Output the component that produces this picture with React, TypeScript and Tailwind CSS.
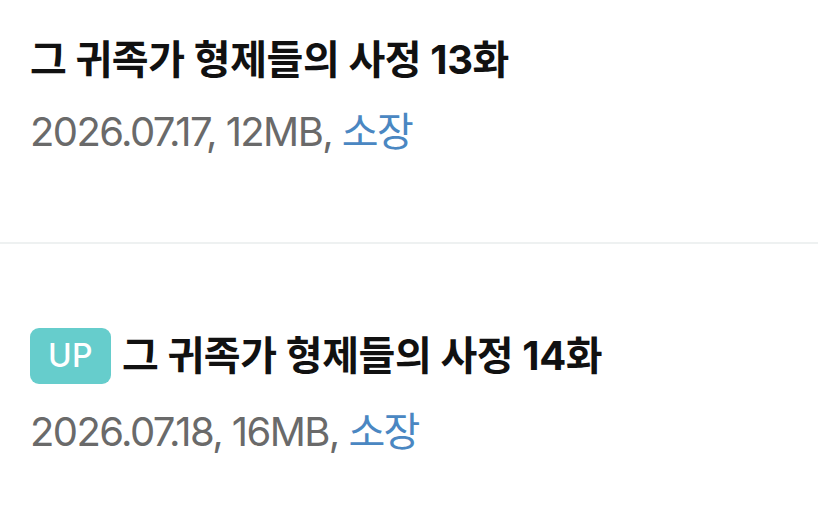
import React from "react";

type Episode = {
  title: string;
  date: string;
  size: string;
  isNew?: boolean;
};

const episodes: Episode[] = [
  { title: "그 귀족가 형제들의 사정 13화", date: "2026.07.17", size: "12MB" },
  { title: "그 귀족가 형제들의 사정 14화", date: "2026.07.18", size: "16MB", isNew: true },
];

const font = { fontFamily: "Inter, 'Noto Sans CJK KR', sans-serif" };

function EpisodeRow({ ep, first }: { ep: Episode; first: boolean }) {
  return (
    <div className={first ? "px-[30px] pt-[36px] pb-[86px]" : "px-[30px] pt-[84px] pb-[60px]"}>
      <div className="flex items-center">
        {ep.isNew && (
          <span className="mr-[11px] flex h-[56px] w-[81px] items-center justify-center rounded-[9px] bg-[#66cdcc] text-[32px] font-medium leading-none tracking-[0.01em] text-white">
            UP
          </span>
        )}
        <h2 className="text-[40px] font-bold leading-[48px] tracking-[-0.01em] text-[#111111]">
          {ep.title}
        </h2>
      </div>
      <p className="mt-[24px] text-[40px] leading-[48px] tracking-[-0.04em] text-[#6a6a6a]">
        {ep.date}, {ep.size}, <span className="text-[#4a87c2]">소장</span>
      </p>
    </div>
  );
}

export default function App() {
  return (
    <div className="min-h-[507px] w-[818px] bg-white" style={font}>
      {episodes.map((ep, i) => (
        <div key={ep.title} className={i > 0 ? "border-t-2 border-[#eef1f1]" : ""}>
          <EpisodeRow ep={ep} first={i === 0} />
        </div>
      ))}
    </div>
  );
}
